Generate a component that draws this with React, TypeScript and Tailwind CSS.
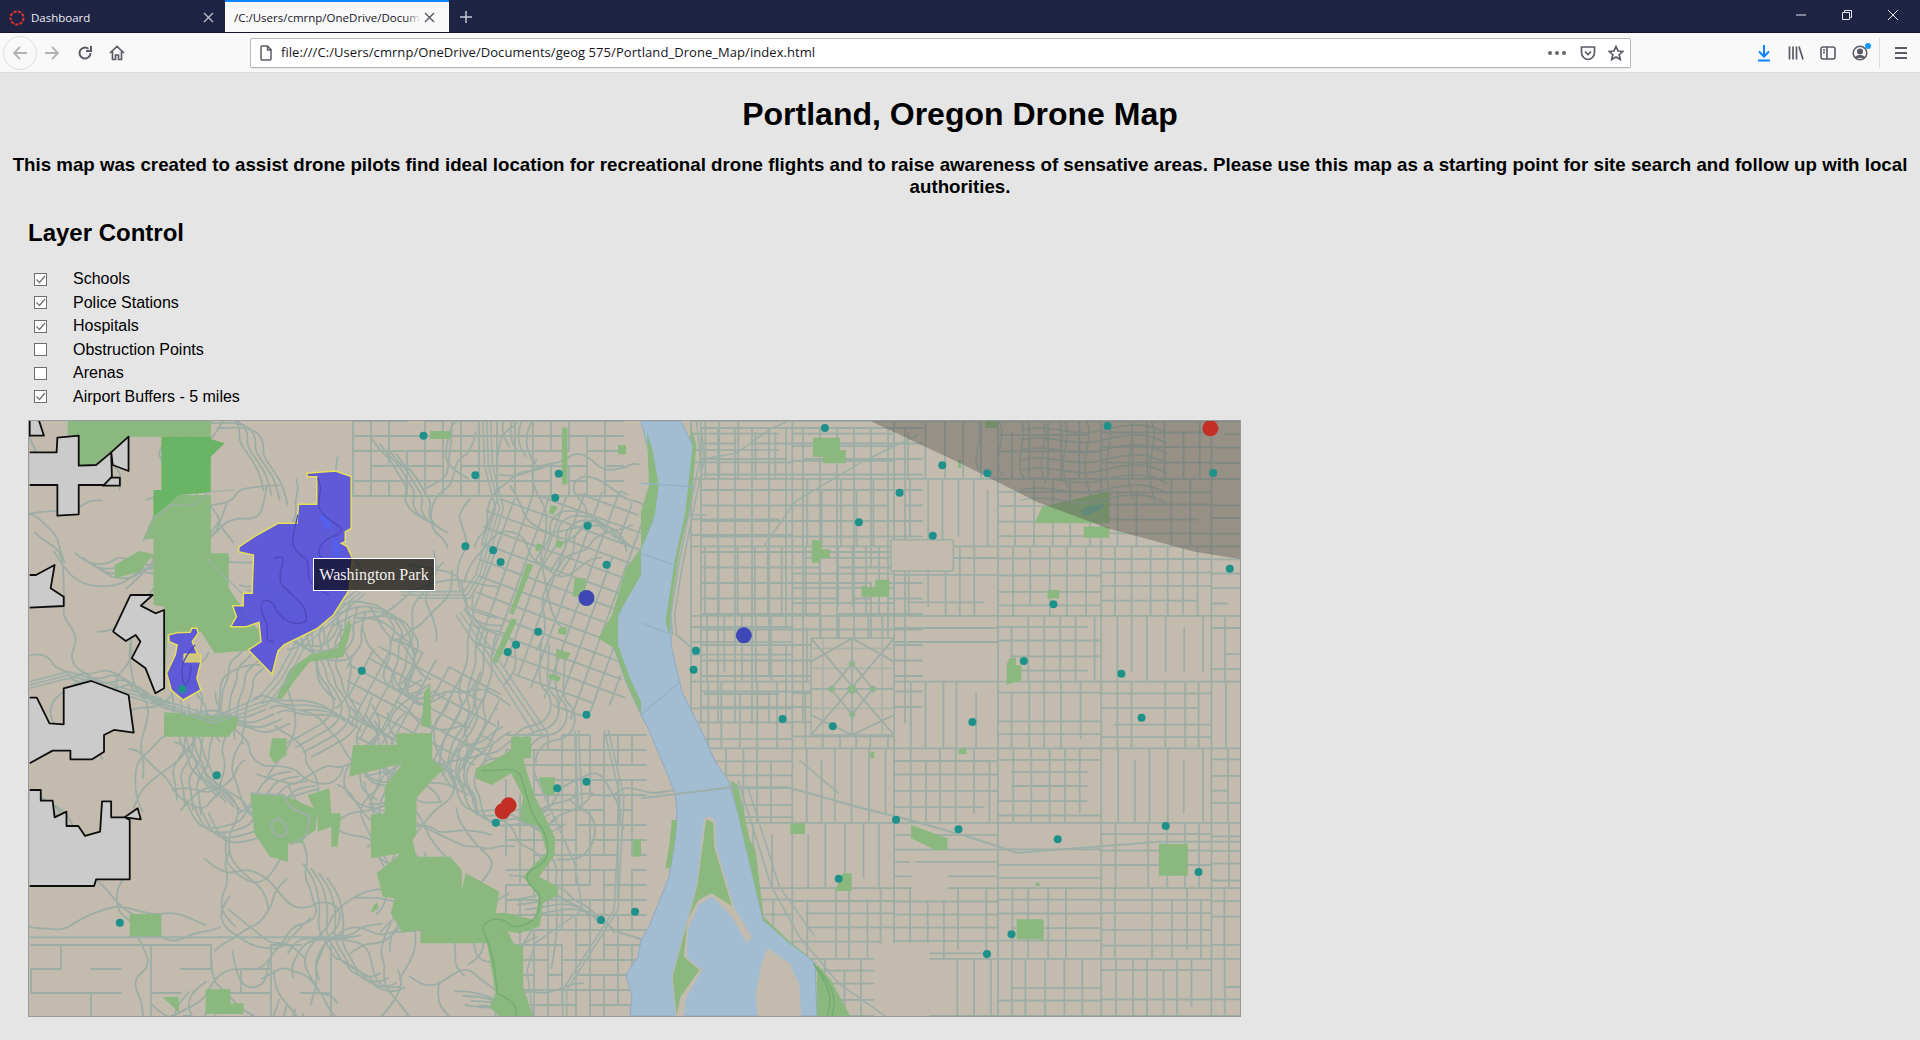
import React from "react";

function mulberry(a: number) {
  return () => {
    a |= 0; a = (a + 0x6d2b79f5) | 0;
    let t = Math.imul(a ^ (a >>> 15), 1 | a);
    t = (t + Math.imul(t ^ (t >>> 7), 61 | t)) ^ t;
    return ((t ^ (t >>> 14)) >>> 0) / 4294967296;
  };
}
const r1 = mulberry(11);
const f = (n: number) => n.toFixed(1);

function eastGrid(x0: number, x1: number, y0: number, y1: number, dense: number) {
  let d = "";
  const xs: number[] = [];
  for (let x = x0; x < x1; x += 88 + r1() * 26) xs.push(x);
  xs.push(x1);
  const ys: number[] = [];
  for (let y = y0; y < y1; y += 56 + r1() * 22) ys.push(y);
  ys.push(y1);
  for (const y of ys) d += `M${x0} ${f(y)}H${x1}`;
  for (const x of xs) d += `M${f(x)} ${y0}V${y1}`;
  for (let i = 0; i < xs.length - 1; i++) {
    for (let j = 0; j < ys.length - 1; j++) {
      const a = xs[i], b = xs[i + 1], c = ys[j], e = ys[j + 1];
      const o = r1();
      const full = r1() < dense;
      if (o < 0.5 || full) {
        for (let x = a + 13 + r1() * 5; x < b - 6; x += 13 + r1() * 7) {
          if (r1() < 0.93) d += `M${f(x)} ${f(c + (r1() < 0.15 ? 12 : 0))}V${f(e - (r1() < 0.15 ? 10 : 0))}`;
        }
      }
      if (o >= 0.5 || full) {
        for (let y = c + 11 + r1() * 3; y < e - 5; y += 12 + r1() * 5) {
          if (r1() < 0.93) d += `M${f(a + (r1() < 0.15 ? 14 : 0))} ${f(y)}H${f(b - (r1() < 0.15 ? 14 : 0))}`;
        }
      }
    }
  }
  return d;
}

function plainGrid(x0: number, x1: number, y0: number, y1: number, dx: number, dy: number, p = 0.95) {
  let d = "";
  for (let x = x0; x <= x1; x += dx) {
    for (let y = y0; y < y1; y += dy) if (r1() < p) d += `M${f(x)} ${f(y)}V${f(y + dy)}`;
  }
  for (let y = y0; y <= y1; y += dy) {
    for (let x = x0; x < x1; x += dx) if (r1() < p) d += `M${f(x)} ${f(y)}H${f(x + dx)}`;
  }
  return d;
}

function squiggles(x0: number, x1: number, y0: number, y1: number, n: number, bundle: number) {
  let d = "";
  for (let i = 0; i < n; i++) {
    let x = x0 + r1() * (x1 - x0);
    let y = y0 + r1() * (y1 - y0);
    let a = r1() * Math.PI * 2;
    const steps = 6 + Math.floor(r1() * 8);
    const pts: number[][] = [[x, y]];
    for (let s = 0; s < steps; s++) {
      a += (r1() - 0.5) * 1.9;
      const l = 10 + r1() * 12;
      x += Math.cos(a) * l;
      y += Math.sin(a) * l;
      pts.push([x, y]);
    }
    const copies = r1() < 0.18 ? bundle : 1;
    for (let k = 0; k < copies; k++) {
      const o = k * 8;
      d += `M${f(pts[0][0] + o)} ${f(pts[0][1] + o * 0.6)}`;
      for (let s = 1; s < pts.length - 1; s++) {
        const mx = (pts[s][0] + pts[s + 1][0]) / 2 + o;
        const my = (pts[s][1] + pts[s + 1][1]) / 2 + o * 0.6;
        d += `Q${f(pts[s][0] + o)} ${f(pts[s][1] + o * 0.6)} ${f(mx)} ${f(my)}`;
      }
    }
  }
  return d;
}

function neCurves() {
  let d = "";
  for (let i = 0; i < 8; i++) {
    const y = 45 + i * 30;
    d += `M960 ${y} C1040 ${y - 22} 1090 ${y + 26} 1170 ${y} S1290 ${y - 16} 1330 ${y + 10}`;
  }
  for (let i = 0; i < 9; i++) {
    const x = 850 + i * 55;
    d += `M${x} 15 C${x + 26} 70 ${x - 24} 130 ${x + 10} ${170 + i * 12}`;
  }
  return d;
}

const eastD = eastGrid(690, 1240, 421, 1016, 0.6);
const innerD = plainGrid(700, 905, 428, 720, 17, 15.5, 0.97);
const nwD = plainGrid(352, 620, 421, 496, 18, 15, 0.93);
const downtownD = plainGrid(380, 760, 380, 760, 16, 16, 0.98);
const goose = plainGrid(330, 520, 660, 800, 15, 15, 0.93);
const sjD = plainGrid(505, 640, 735, 1016, 14, 15, 0.85);
const hillsD = squiggles(30, 560, 421, 1016, 105, 4);
const hills2D = squiggles(200, 470, 700, 1000, 40, 4);
const swD = plainGrid(30, 330, 945, 1016, 30, 24, 0.65);
const neD = neCurves();

const c4 = (x: number, y: number): [number, number] => [20 + x / 2.529, 415 + y / 3];
const c5 = (x: number, y: number): [number, number] => [640 + x / 2.529, 415 + y / 3];
const c6 = (x: number, y: number): [number, number] => [20 + x / 2.529, 730 + y / 3];
const c7 = (x: number, y: number): [number, number] => [640 + x / 2.529, 730 + y / 3];

const schools: [number, number][] = [
  ...([[1018,62],[1149,181],[1360,176],[1351,248],[1433,332],[1124,394],[1194,406],[1213,441],[1481,449],[1308,650],[1252,689],[1231,711],[862,767],[408,823],[1430,899]] as [number,number][]).map(p => c4(p[0], p[1])),
  ...([[465,39],[762,151],[876,175],[654,233],[551,322],[738,362],[1180,33],[1447,174],[1489,461],[1043,568],[139,707],[133,764],[968,738],[1215,776],[358,912],[485,934],[838,921],[1266,908]] as [number,number][]).map(p => c5(p[0], p[1])),
  ...([[495,136],[250,578],[1201,278],[1356,175],[1430,155],[1467,570],[1553,545]] as [number,number][]).map(p => c6(p[0], p[1])),
  ...([[645,269],[803,298],[1054,328],[1327,288],[1410,426],[500,446],[937,613],[875,672]] as [number,number][]).map(p => c7(p[0], p[1])),
];

const ns = { vectorEffect: "non-scaling-stroke" as const };
const T4 = "translate(20,415) scale(.3954,.3333)";
const T5 = "translate(640,415) scale(.3954,.3333)";
const T6 = "translate(20,730) scale(.3954,.3333)";
const T7 = "translate(640,730) scale(.3954,.3333)";
const PARK = "#8ab87f";
const ROAD = "#9cada6";
const LAND = "#c3bbae";

function MapArt() {
  return (
    <svg viewBox="28 421 1211 595" preserveAspectRatio="none" className="block w-full h-full blur-[0.35px]">
      <defs>
        <clipPath id="dt"><path d="M486 500 L625 490 L650 540 L612 640 L625 700 L570 720 L470 640 L478 560 Z" /></clipPath>
        <clipPath id="gh"><path d="M345 660 L470 610 L500 690 L490 760 L400 790 L350 730 Z" /></clipPath>
      </defs>
      <rect x="28" y="421" width="1211" height="595" fill={LAND} />
      {/* streets */}
      <g fill="none" stroke={ROAD} strokeWidth="1.8" strokeLinecap="round">
        <path d={hillsD} />
        <path d={hills2D} />
        <path d={swD} />
        <path d={eastD} />
        <path d={innerD} />
        <path d={nwD} />
        <path d={sjD} />
        <g clipPath="url(#dt)"><path d={downtownD} transform="rotate(20 560 570)" /></g>
        <g clipPath="url(#gh)"><path d={goose} transform="rotate(28 420 720)" /></g>
      </g>
      {/* river */}
      <path fill="#a2bdd2" stroke="#8fa9c6" strokeWidth="1" d="M640 421 L646 445 L657 485 L652 520 L640 548 L628 590 L616 620 L613 648 L625 682 L640 715 L648 730 L674 793 L676 810 L674 840 L668 877 L648 927 L640 940 L637 957 L625 975 L631 997 L629 1016 L816 1016 L814 963 L790 943 L762 920 L755 890 L737 813 L727 780 L715 763 L701 732 L681 692 L670 645 L670 598 L680 538 L691 498 L693 448 L680 421 Z" />
      {/* open land patches */}
      <g transform={T5} fill={LAND} stroke={ROAD} strokeWidth="1.5">
        <rect {...ns} x="632" y="374" width="158" height="94" rx="6" />
        <path {...ns} d="M430 670 H640 V960 H430Z" />
      </g>
      <g transform={T7} fill={LAND}>
        <path d="M590 640 H730 V860 H590Z" />
        <path d="M680 390 L775 435 V510 H690Z" />
      </g>
      <g transform={T5} fill="none" stroke={ROAD} strokeWidth="1.8">
        <path {...ns} d="M430 670 L640 960 M640 670 L430 960 M534 670 V960 M430 822 H640 M430 740 L534 670 L640 740 M430 900 L534 960 L640 900 M480 822 L534 745 L586 822 L534 898 Z" />
        <path {...ns} d="M430 700H640 M430 760H640 M430 880H640 M460 670V960 M610 670V960" opacity=".6" />
      </g>
      <g transform={T5} fill={PARK} stroke={ROAD}>
        <ellipse {...ns} cx="534" cy="822" rx="10" ry="14" />
        <ellipse {...ns} cx="482" cy="822" rx="8" ry="9" />
        <ellipse {...ns} cx="586" cy="822" rx="8" ry="9" />
        <ellipse {...ns} cx="534" cy="746" rx="7" ry="9" />
        <ellipse {...ns} cx="534" cy="898" rx="7" ry="9" />
      </g>
      {/* parks */}
      <g transform={T4} fill={PARK}>
        <path d="M118 15 H480 V65 H272 L185 150 H146 V60 H118 Z" />
        <path d="M335 300 L400 240 H480 V415 H525 V520 L590 630 L608 660 L590 705 L490 715 L455 650 L370 660 L362 845 V575 L335 570 V370 L308 375 Z" />
        <path fill="#6ab565" d="M355 65 H480 V72 L515 85 L480 125 V232 L400 240 L335 305 V225 H355 Z" />
        <path d="M237 450 L300 408 L335 418 L300 470 L237 490Z" />
        <path d="M362 892 L550 905 L545 935 L528 960 H362Z" />
        <rect x="1035" y="48" width="52" height="24" />
        <rect x="1510" y="90" width="20" height="28" />
        <rect x="1368" y="38" width="14" height="170" />
        <path d="M1240 610 L1255 615 L1205 745 L1192 738 Z" />
        <path d="M1340 270 L1358 275 L1345 300 L1335 295 Z M1305 385 L1320 390 L1310 410 L1300 405 Z M1355 375 L1375 380 L1365 400 L1350 395Z M1360 640 L1380 635 L1378 660 L1358 655Z M1355 702 L1390 715 L1380 735 L1352 725 Z M1335 775 L1365 785 L1360 800 L1335 790 Z M1280 445 L1295 450 L1245 600 L1235 595 Z" />
        <path d="M645 850 L680 762 L730 720 L800 700 L830 610 L835 640 L815 725 L730 740 L690 800 L660 852 Z" />
        <path d="M1012 935 L1020 830 L1035 810 L1038 935 Z" />
        <path d="M1400 490 L1428 490 L1425 545 L1395 545Z" />
        <path d="M1568 400 L1530 460 L1495 600 L1460 670 L1500 700 L1530 800 L1568 900 V860 L1540 790 L1510 690 L1510 600 L1568 480Z" />
      </g>
      <g transform={T6} fill={PARK}>
        <path d="M840 45 H950 V10 H1040 V90 L1070 118 L1040 150 L1000 205 V310 L990 330 L1000 380 H1085 L1115 420 V480 L1125 430 L1210 485 L1200 550 H1230 V600 L1245 640 H1010 V600 L965 608 L935 550 L945 505 L915 500 L900 430 L960 370 L885 385 V255 L920 250 V170 L965 100 L830 140 Z" />
        <path d="M580 190 L665 195 L750 240 L745 300 L720 320 L710 340 H675 V395 L630 380 L590 310 Z" />
        <path d="M635 25 H672 V75 L640 100 L628 75 Z" />
        <path d="M725 195 L780 175 L785 250 H808 V275 L800 350 H785 V290 L750 305 L750 260 Z" />
        <path d="M467 778 H530 V820 H563 V852 H467 Z" />
        <rect x="275" y="552" width="80" height="68" />
        <path d="M358 802 L398 800 L400 850 L380 825 Z" />
        <path d="M362 0 H528 V20 H362Z" />
        <path d="M1240 20 H1290 V85 H1270 L1280 130 L1300 200 L1350 320 V375 L1310 440 L1358 470 V495 L1320 520 L1312 590 L1260 610 L1165 590 V550 H1230 L1300 570 L1310 500 L1270 440 L1300 400 L1330 370 L1310 290 L1260 270 L1270 200 L1240 130 L1190 165 L1150 145 V115 L1190 95 L1240 60 Z" />
        <path d="M1170 580 L1245 640 L1270 650 V770 L1295 860 H1210 L1185 830 L1200 790 Z" />
        <path d="M1310 142 H1350 V195 H1322Z" />
        <rect x="1548" y="328" width="20" height="52" />
        <path d="M890 530 L900 515 L905 535 L885 548 Z" />
      </g>
      <g transform={T6} fill="none" stroke="#74ab73" strokeWidth="1.4">
        <path {...ns} d="M1165 120 C1200 130 1250 100 1265 140 C1280 200 1290 260 1320 300 C1345 370 1330 400 1290 420 C1265 445 1290 470 1310 490 C1320 560 1290 590 1240 590 C1215 550 1165 570 1168 600 C1200 680 1200 750 1205 790 C1240 810 1260 830 1250 860" />
      </g>
      <g transform={T6} fill="none" stroke="#9fb0a8" strokeWidth="2">
        <path {...ns} d="M580 190 L665 195 L680 230 L730 260 L720 320 L680 345 M650 270 C625 265 630 310 650 318 C680 325 680 285 650 265" />
      </g>
      <g transform={T5} fill={PARK}>
        <path d="M435 68 H503 V105 H518 V145 H460 V125 H435 Z" />
        <path d="M432 375 H457 V403 H478 V430 H452 V443 H432 Z" />
        <path d="M558 512 H570 V518 H592 V494 H628 V545 H558 Z" />
        <rect x="1028" y="525" width="30" height="25" />
        <path d="M925 748 L932 730 H948 V750 H962 V800 H945 L925 810 Z" />
        <path d="M1015 275 L1185 228 V325 H995 Z" />
        <rect x="1120" y="335" width="65" height="33" />
        <rect x="870" y="15" width="32" height="24" />
        <rect x="802" y="135" width="8" height="24" />
        <path d="M15 50 L30 110 L45 210 L35 300 L0 405 V290 L20 210 Z" />
        <path d="M125 30 L140 90 L128 250 L95 420 L80 540 L72 660 L62 620 L85 440 L112 290 L130 100 Z" />
      </g>
      <g transform={T5}>
        <path fill="#6fb099" d="M1108 292 L1130 275 L1172 265 L1165 282 L1125 303 Z" />
      </g>
      <g transform={T7} fill={PARK}>
        <rect x="378" y="280" width="37" height="32" />
        <path d="M683 285 L775 325 V360 H745 L683 325 Z" />
        <rect x="1310" y="342" width="73" height="95" />
        <path d="M950 568 H1018 V635 L1005 628 H950 Z" />
        <path d="M510 430 H533 V483 H490 L498 462 Z" />
        <rect x="580" y="65" width="10" height="20" />
        <path d="M803 60 L815 55 H823 V72 H803Z" />
        <rect x="998" y="458" width="10" height="10" />
        <path d="M225 150 L245 165 L275 330 L290 362 L310 560 L380 640 L440 695 L480 750 L530 860 H445 V700 L380 645 L310 572 L290 480 L245 250 Z" />
        <path d="M78 270 H92 L85 340 L75 415 H62 L72 340 Z" />
        <path fill={LAND} d="M320 655 L375 700 L400 760 L405 860 H295 L290 790 L305 700 Z" />
        <path fill={LAND} d="M160 265 L175 260 L188 275 L190 350 L235 530 L280 620 L268 640 L230 560 L180 500 L145 525 L118 600 L115 680 L155 720 L115 800 L108 860 H88 L78 740 L110 600 L140 470 Z" />
        <path d="M165 268 L183 278 L185 350 L230 528 L178 490 L145 510 L118 570 L108 680 L148 720 L100 800 L90 855 L80 740 L112 600 L142 470 Z" />
      </g>
      <g transform={T7} fill="none" stroke="#72ab72" strokeWidth="1.3">
        <path {...ns} d="M436 700 C470 760 490 800 470 860 M436 700 C480 760 500 800 482 860" />
      </g>
      {/* freeways */}
      <g fill="none" stroke="#9dafa9" strokeWidth="1.6">
        <g transform={T4}>
          <path {...ns} d="M1168 15 L1172 150 L1200 280 L1150 480 L1120 530 L960 530" />
          <path {...ns} d="M1178 15 L1182 150 L1210 280 L1160 480 L1128 540 L960 540" />
          <path {...ns} d="M1188 15 L1192 150 L1220 280 L1170 480 L1135 550 L1000 550" />
          <path {...ns} d="M850 525 L700 670 L650 780 L600 850 L490 905 L290 830 L120 770 L22 800" />
          <path {...ns} d="M860 530 L710 680 L660 790 L610 860 L490 915 L290 840 L120 780 L22 810" />
          <path {...ns} d="M870 535 L720 690 L670 800 L620 870 L490 925 L290 850 L120 790 L22 820" />
          <path {...ns} d="M1100 600 L1230 830 L1300 960 M1110 590 L1240 820 L1320 960 M1120 580 L1250 810 L1335 960" />
          <path {...ns} d="M540 225 L480 230 L440 268 L380 270 L335 310 L310 380 M580 560 L470 430" opacity=".8" />
        </g>
        <g transform={T5}>
          <path {...ns} d="M150 15 L160 130 L130 300 L105 450 L85 600 L90 660 L130 700 M140 15 L150 130 L120 300 L95 450 L75 600 L80 660 M120 300 L165 300 M165 130 L240 115 L330 40 L380 15 M310 395 L390 260 L560 140 L700 60" />
          <path {...ns} d="M0 205 L130 215 M0 415 L85 450 M0 625 L70 655 M0 900 L100 800" stroke="#96b3c4" />
          <path {...ns} d={neD} clipPath="url(#ne)" />
        </g>
        <g transform={T6}>
          <path {...ns} d="M1400 0 L1410 240 M1410 0 L1420 240 M1475 0 L1515 200 L1500 540 L1370 780 L1370 860 M1485 0 L1525 200 L1510 540 L1380 780 L1380 860 M1295 120 L1400 400 L1420 540 L1300 640 L1280 720 L1295 860" />
          <path {...ns} d="M22 622 H840" strokeWidth="2" />
        </g>
        <g transform={T7}>
          <path {...ns} d="M0 205 L230 172 L370 172 L560 235 L680 270 L840 325 L950 368 L1100 355 L1310 335 L1516 335" strokeWidth="2" />
          <path {...ns} d="M245 150 L330 470 L400 620 L500 760 L620 860 M400 90 L500 190 M270 170 L350 470 L440 620" />
        </g>
      </g>
      {/* cities */}
      <g transform={T4} fill="#cbcbcb" stroke="#0d0d0d" strokeWidth="1.8" strokeLinejoin="round">
        <path {...ns} d="M22 15 H45 L58 62 H22 Z" />
        <path {...ns} d="M228 112 L272 65 V168 L232 150 Z" />
        <path {...ns} d="M225 188 H250 V212 H207 Z" />
        <path {...ns} d="M22 112 H90 L92 68 L146 62 V152 L190 150 L228 112 L230 185 L210 210 H146 V298 L92 302 V210 H22" />
        <path {...ns} d="M22 480 H38 L85 450 L75 520 L108 545 V573 L22 578" />
        <path {...ns} d="M277 540 H333 L303 572 L340 595 L362 585 V820 L340 835 L315 760 L280 730 L302 680 L290 660 L265 678 L233 650 Z" />
        <path {...ns} d="M22 848 H40 L72 925 L108 928 V820 L178 798 L272 840 L285 953 L235 945 L210 960 V1010 L180 1033 H125 V1007 H80 L22 1045" />
      </g>
      <g transform={T6} fill="#cbcbcb" stroke="#0d0d0d" strokeWidth="1.8" strokeLinejoin="round">
        <path {...ns} d="M295 235 L303 268 L262 262 Z" />
        <path {...ns} d="M22 180 H50 V212 H80 L85 262 L115 245 V288 H145 L162 318 L200 305 L205 214 H228 V262 H262 L275 270 V448 H190 L185 468 H22" />
      </g>
      {/* washington park */}
      <g transform={T4}>
        <path {...ns} fill="#5450dd" fillOpacity=".9" stroke="#e8de58" strokeWidth="1.5" d="M722 175 L795 168 L835 185 V340 L820 350 V380 L810 385 L825 395 L838 430 L830 525 L790 600 L750 640 L665 690 L650 708 L635 778 L575 705 L607 680 L602 622 L570 635 L530 635 L545 605 L535 572 H562 V535 H585 V515 L588 420 L550 410 L552 395 L590 365 L650 325 H698 L702 268 H748 V185 H725 Z" />
        <path {...ns} fill="#5450dd" fillOpacity=".9" stroke="#e8de58" strokeWidth="1.5" d="M432 640 L445 640 L448 655 L433 680 L455 740 L445 790 L455 825 L410 855 L380 825 L368 775 L390 720 L395 690 L375 680 L373 660 L395 653 L428 652 Z" />
        <rect {...ns} x="412" y="717" width="42" height="24" fill="#cfc77f" stroke="#e8de58" />
        <path fill="#5560ea" d="M752 300 L775 300 L788 340 L770 345 Z M788 365 L805 380 L808 430 L792 425 Z" />
        <g fill="none" stroke="#4b49b9" strokeWidth="1.3">
          <path {...ns} d="M750 190 C770 230 740 260 760 290 C790 340 830 330 800 360 C770 370 740 400 760 430" />
          <path {...ns} d="M640 430 C690 410 640 470 660 510 C690 550 730 570 720 620 C680 640 650 600 640 570 C620 540 590 560 620 620 C630 660 610 680 640 680" />
          <path {...ns} d="M700 300 C690 360 670 400 720 430 C740 470 700 500 780 540" />
          <path {...ns} d="M440 690 C420 720 400 740 410 800 C420 830 430 780 430 750" />
        </g>
      </g>
      {/* airport */}
      <g transform={T5}>
        <path fill="#4b4441" fillOpacity=".36" d="M575 15 L800 140 L1000 260 L1180 340 L1400 410 L1516 432 V15 Z" />
        <ellipse cx="1188" cy="72" rx="12" ry="14" fill="none" stroke="#7d8580" strokeWidth="1" />
      </g>
      {/* markers */}
      {schools.map((p, i) => (
        <circle key={i} cx={p[0]} cy={p[1]} r="4" fill="#1e918b" />
      ))}
      {[c4(1430, 549), c5(260, 661)].map((p, i) => (
        <circle key={i} cx={p[0]} cy={p[1]} r="8" fill="#3f47b6" />
      ))}
      {[c5(1440, 40), c6(1233, 226), c6(1218, 244)].map((p, i) => (
        <circle key={i} cx={p[0]} cy={p[1]} r="8" fill="#c42f25" />
      ))}
    </svg>
  );
}

function Check({ on }: { on: boolean }) {
  return (
    <span className="w-[13px] h-[13px] border border-[#6f6f6f] bg-white flex items-center justify-center">
      {on && (
        <svg width="11" height="11" viewBox="0 0 11 11" fill="none">
          <path d="M1.5 5.5 L4.5 8.5 L10 2" stroke="#707070" strokeWidth="1.2" />
        </svg>
      )}
    </span>
  );
}

const layers: [string, boolean][] = [
  ["Schools", true],
  ["Police Stations", true],
  ["Hospitals", true],
  ["Obstruction Points", false],
  ["Arenas", false],
  ["Airport Buffers - 5 miles", true],
];

function TabBar() {
  return (
    <div className="h-[33px] bg-[#1f2344] flex items-stretch text-[11.5px] font-['Open_Sans','Liberation_Sans',sans-serif] border-b border-[#12152c]">
      <div className="w-[225px] flex items-center pl-[9px] pr-[11px] pt-[3px] text-[#eceef5]">
        <svg width="16" height="16" viewBox="0 0 16 16" fill="none" className="mr-[6px] shrink-0">
          <circle cx="8" cy="8" r="6.5" stroke="#e5352b" strokeWidth="2" strokeDasharray="3 1.4" />
        </svg>
        <span className="flex-1">Dashboard</span>
        <svg width="11" height="11" viewBox="0 0 11 11" stroke="#b8bac6" strokeWidth="1.4"><path d="M1 1 L10 10 M10 1 L1 10" /></svg>
      </div>
      <div className="w-[224px] bg-[#f9f9fa] border-t-2 border-[#0a84ff] flex items-center pl-[9px] pr-[8px] pt-[1px] text-[#16161d]">
        <span className="relative w-[187px] overflow-hidden whitespace-nowrap">
          /C:/Users/cmrnp/OneDrive/Docum
          <i className="absolute right-0 top-0 bottom-0 w-[16px] bg-gradient-to-r from-transparent to-[#f9f9fa]" />
        </span>
        <svg width="11" height="11" viewBox="0 0 11 11" stroke="#55555f" strokeWidth="1.4" className="ml-[3px]"><path d="M1 1 L10 10 M10 1 L1 10" /></svg>
      </div>
      <div className="flex items-center pl-[10px] pt-[1px]">
        <svg width="14" height="14" viewBox="0 0 14 14" stroke="#c5c7d3" strokeWidth="1.5"><path d="M7 1 V13 M1 7 H13" /></svg>
      </div>
      <div className="flex-1" />
      <div className="flex items-center gap-[36px] pr-[22px] pb-[2px]">
        <svg width="10" height="10" viewBox="0 0 10 10" stroke="#e8e9f0"><path d="M0 5 H10" /></svg>
        <svg width="10" height="10" viewBox="0 0 10 10" stroke="#e8e9f0" fill="none"><path d="M0.5 2.5 H7.5 V9.5 H0.5 Z M2.5 2.5 V0.5 H9.5 V7.5 H7.5" /></svg>
        <svg width="10" height="10" viewBox="0 0 10 10" stroke="#e8e9f0"><path d="M0 0 L10 10 M10 0 L0 10" /></svg>
      </div>
    </div>
  );
}

function ToolBar() {
  const g = "#5b5b66";
  return (
    <div className="h-[40px] bg-[#f9f9fa] border-b border-[#dcdcde] flex items-center text-[13px] font-['Open_Sans','Liberation_Sans',sans-serif]">
      <div className="w-[34px] h-[34px] ml-[3px] rounded-full border border-[#dedee0] flex items-center justify-center shrink-0">
        <svg width="16" height="16" viewBox="0 0 16 16" fill="none" stroke="#b1b1b5" strokeWidth="1.8"><path d="M15 8 H2 M8 2 L2 8 L8 14" /></svg>
      </div>
      <svg width="16" height="16" viewBox="0 0 16 16" fill="none" stroke="#b1b1b5" strokeWidth="1.8" className="ml-[7px] shrink-0"><path d="M1 8 H14 M8 2 L14 8 L8 14" /></svg>
      <svg width="16" height="16" viewBox="0 0 16 16" fill="none" stroke={g} strokeWidth="2" className="ml-[17px] shrink-0"><path d="M13.5 8 A5.5 5.5 0 1 1 11.5 3.8 M14 1 V6 H9" /></svg>
      <svg width="16" height="16" viewBox="0 0 16 16" fill="none" stroke={g} strokeWidth="1.7" className="ml-[16px] shrink-0"><path d="M1 8 L8 1.5 L15 8 M3.5 6.5 V14.5 H6.5 V10 H9.5 V14.5 H12.5 V6.5" /></svg>
      <div className="ml-[125px] w-[1381px] h-[30px] bg-white border border-[#b8b8b8] rounded-[2px] flex items-center shrink-0 shadow-[0_1px_1px_rgba(0,0,0,.08)]">
        <svg width="16" height="16" viewBox="0 0 16 16" fill="none" stroke={g} strokeWidth="1.5" className="ml-[7px] shrink-0"><path d="M3 2 Q3 1 4 1 H9.5 L13 4.5 V14 Q13 15 12 15 H4 Q3 15 3 14 Z M9.5 1 V5 H13" /></svg>
        <span className="ml-[7px] flex-1 text-[#15151a] whitespace-nowrap tracking-[0.06px]">file:///C:/Users/cmrnp/OneDrive/Documents/geog 575/Portland_Drone_Map/index.html</span>
        <span className="flex gap-[3px] mr-[14px]">
          <i className="w-[4px] h-[4px] rounded-full bg-[#666]" /><i className="w-[4px] h-[4px] rounded-full bg-[#666]" /><i className="w-[4px] h-[4px] rounded-full bg-[#666]" />
        </span>
        <svg width="16" height="16" viewBox="0 0 16 16" fill="none" stroke={g} strokeWidth="1.7" className="mr-[12px]"><path d="M1.5 2 H14.5 V7.5 C14.5 11.5 11 14.5 8 14.5 C5 14.5 1.5 11.5 1.5 7.5 Z M5 6.5 L8 9.5 L11 6.5" /></svg>
        <svg width="16" height="16" viewBox="0 0 16 16" fill="none" stroke={g} strokeWidth="1.7" className="mr-[6px]"><path d="M8 1.5 L10 6 L14.8 6.5 L11.2 9.7 L12.3 14.5 L8 12 L3.7 14.5 L4.8 9.7 L1.2 6.5 L6 6 Z" /></svg>
      </div>
      <div className="ml-[125px] flex items-center shrink-0">
        <svg width="16" height="18" viewBox="0 0 16 18" fill="none" stroke="#0a84ff" strokeWidth="2"><path d="M8 1 V12 M3 7.5 L8 12.5 L13 7.5 M2 16.5 H14" /></svg>
        <svg width="16" height="16" viewBox="0 0 16 16" fill="none" stroke={g} strokeWidth="1.7" className="ml-[16px]"><path d="M1.5 1.5 V14.5 M5 1.5 V14.5 M8.5 1.5 V14.5 M11 1.5 L15 14.5" /></svg>
        <svg width="16" height="16" viewBox="0 0 16 16" fill="none" stroke={g} strokeWidth="1.6" className="ml-[16px]"><rect x="1" y="2" width="14" height="12" rx="2" /><path d="M7 2 V14 M3 5 H5 M3 7.5 H5" /></svg>
        <span className="relative ml-[16px] w-[16px] h-[16px]">
          <svg width="16" height="16" viewBox="0 0 16 16" fill="none" stroke={g} strokeWidth="1.5"><circle cx="8" cy="8" r="6.8" /><circle cx="8" cy="6.5" r="2.3" fill={g} /><path d="M3.5 13 C4.5 10 11.5 10 12.5 13" fill={g} /></svg>
          <i className="absolute -top-[2px] -right-[3px] w-[6px] h-[6px] rounded-full bg-[#0a9dff]" />
        </span>
        <span className="ml-[11px] w-px h-[30px] bg-[#dcdcde]" />
        <svg width="14" height="14" viewBox="0 0 14 14" stroke={g} strokeWidth="1.8" className="ml-[14px]"><path d="M1 2 H13 M1 7 H13 M1 12 H13" /></svg>
      </div>
    </div>
  );
}

export default function App() {
  return (
    <div className="w-[1920px] h-[1040px] overflow-hidden bg-[#e5e5e5] text-black font-['Liberation_Sans',Arial,sans-serif]">
      <TabBar />
      <ToolBar />
      <div className="pt-[23px]">
        <h1 className="text-[32px] leading-[37px] font-bold text-center">Portland, Oregon Drone Map</h1>
        <p className="mt-[21px] mx-[8px] text-[18.72px] leading-[22px] font-bold text-center">
          This map was created to assist drone pilots find ideal location for recreational drone flights and to raise awareness of sensative areas. Please use this map as a starting point for site search and follow up with local authorities.
        </p>
        <h3 className="mt-[21px] ml-[28px] text-[24px] leading-[28px] font-bold">Layer Control</h3>
        <ul className="mt-[20.5px] ml-[34px]">
          {layers.map(([name, on]) => (
            <li key={name} className="h-[23.5px] flex items-center text-[16px]">
              <Check on={on} />
              <span className="ml-[26px]">{name}</span>
            </li>
          ))}
        </ul>
        <div className="relative mt-[11.5px] ml-[28px] w-[1213px] h-[597px] border border-[#999]">
          <MapArt />
          <div className="absolute left-[284px] top-[137px] w-[122px] h-[33px] border border-white bg-[#000000a8] text-[#f3f1ee] flex items-center justify-center text-[16px] font-['Liberation_Serif',serif]">
            Washington Park
          </div>
        </div>
      </div>
    </div>
  );
}
